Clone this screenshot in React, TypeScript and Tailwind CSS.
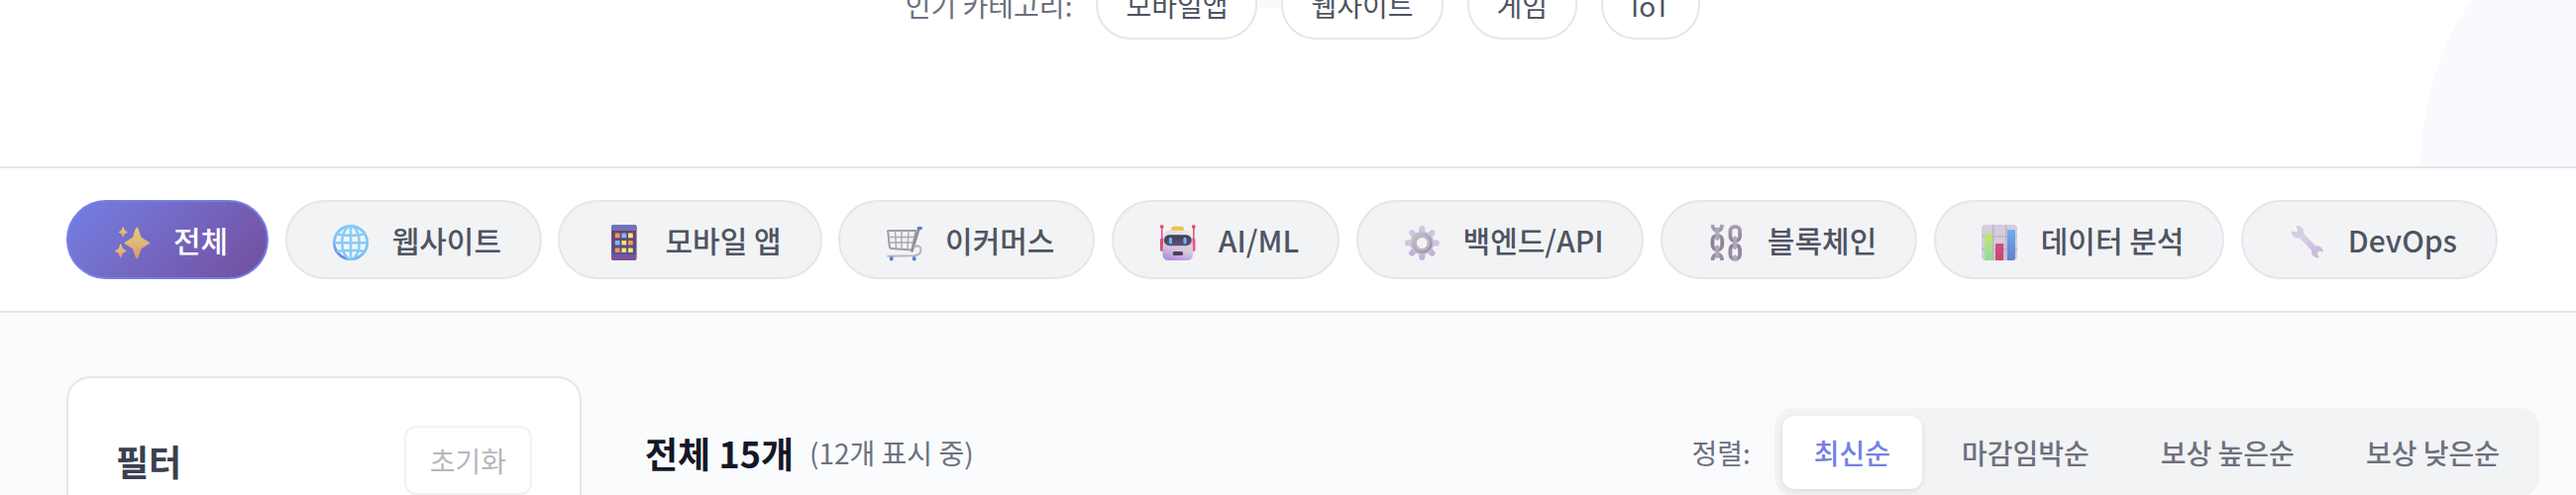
import { useState, type ReactNode } from "react";

function Icon({ children }: { children: ReactNode }) {
  return (
    <svg aria-hidden="true" viewBox="-6 -6 48 43" className="h-[43px] w-12 shrink-0 opacity-80">
      {children}
    </svg>
  );
}

function star(cx: number, cy: number, rx: number, ry: number) {
  const a = rx * 0.3;
  const b = ry * 0.3;
  return `M${cx} ${cy - ry}Q${cx + a * 0.35} ${cy - ry} ${cx + a} ${cy - b * 1.3}Q${cx + a * 1.2} ${cy - b * 1.1} ${cx + rx} ${cy}Q${cx + a * 1.2} ${cy + b * 1.1} ${cx + a} ${cy + b * 1.3}Q${cx + a * 0.35} ${cy + ry} ${cx} ${cy + ry}Q${cx - a * 0.35} ${cy + ry} ${cx - a} ${cy + b * 1.3}Q${cx - a * 1.2} ${cy + b * 1.1} ${cx - rx} ${cy}Q${cx - a * 1.2} ${cy - b * 1.1} ${cx - a} ${cy - b * 1.3}Q${cx - a * 0.35} ${cy - ry} ${cx} ${cy - ry}Z`;
}

const Sparkles = () => (
  <Icon>
    <defs>
      <linearGradient id="spark" x1="0" y1="0" x2="0" y2="1">
        <stop offset="0" stopColor="#fbe562" />
        <stop offset=".5" stopColor="#fccb62" />
        <stop offset="1" stopColor="#f79a60" />
      </linearGradient>
    </defs>
    <path fill="url(#spark)" d={star(23.2, 18.6, 13.4, 16)} />
    <path fill="url(#spark)" d={star(9.3, 7.5, 4.8, 5.6)} />
    <path fill="url(#spark)" d={star(6.8, 26.5, 6.2, 7.2)} />
  </Icon>
);

const Globe = () => (
  <Icon>
    <defs>
      <linearGradient id="globe" x1=".7" y1="0" x2=".2" y2="1">
        <stop offset="0" stopColor="#5fc0f7" />
        <stop offset=".65" stopColor="#62b4fa" />
        <stop offset="1" stopColor="#3a66d8" />
      </linearGradient>
    </defs>
    <circle cx="18" cy="18" r="16.7" fill="#f3f4f6" stroke="url(#globe)" strokeWidth="2.8" />
    <g fill="none" stroke="#6cc2fc" strokeWidth="2.5">
      <ellipse cx="18" cy="18" rx="8.8" ry="16.5" />
      <path d="M18 1v34M1.5 18.3h33M4 9.6q14 2.6 28 0M4 27q14-2.6 28 0" />
    </g>
  </Icon>
);

const tiles = ["#f4812f", "#51b5f8", "#fde04a", "#51b5f8", "#fde04a", "#f4812f", "#f4812f", "#fde04a", "#fde04a"];

const Phone = () => (
  <Icon>
    <defs>
      <linearGradient id="phone" x1="0" y1="0" x2="0" y2="1">
        <stop offset="0" stopColor="#4d1650" />
        <stop offset="1" stopColor="#292c78" />
      </linearGradient>
    </defs>
    <rect x="6" width="25.6" height="36" rx="2.6" fill="#5b2c86" />
    <path d="M6 6V2.6A2.6 2.6 0 0 1 8.6 0H29a2.6 2.6 0 0 1 2.6 2.6V6z" fill="#4c55ab" />
    <rect x="6.7" y="6" width="24.2" height="24" fill="url(#phone)" />
    {tiles.map((fill, i) => (
      <rect key={i} x={9.8 + (i % 3) * 6.6} y={8.6 + Math.floor(i / 3) * 7.4} width="4.8" height="4.6" rx=".5" fill={fill} />
    ))}
  </Icon>
);

const Cart = () => (
  <Icon>
    <g fill="none" strokeLinecap="round" strokeLinejoin="round">
      <path d="M2.3 7.2Q1 6 4 6h26.5L26.3 25.5 5.8 24Q4 24 3.6 21z" stroke="#88878d" strokeWidth="1.9" />
      <path d="M2.5 12.5h27M3.3 18h24.8M9.5 6.5l1 17.500M16 6.500v18M23 6.500l-1 18.500" stroke="#98979e" strokeWidth="1.400" />
      <path d="M33.500 4 26.500 26.500" stroke="#7b7982" strokeWidth="2.600" />
      <path d="M29 22.500c4-3 7 .5 6.400 3.500-.6 4-3.400 5-6.400 5.200L2.300 31.800" stroke="#aaa5b2" strokeWidth="2.100" />
    </g>
    <rect x="31.800" y="2" width="5" height="3" rx=".8" fill="#315fc4" />
    <ellipse cx="5.700" cy="34.300" rx="1.900" ry="2.200" fill="#315fc4" />
    <ellipse cx="28.700" cy="34.300" rx="1.900" ry="2.200" fill="#315fc4" />
  </Icon>
);

const Robot = () => (
  <Icon>
    <defs>
      <linearGradient id="bot" x1=".7" y1="0" x2=".4" y2="1">
        <stop offset="0" stopColor="#e9e4ec" />
        <stop offset=".65" stopColor="#cbbbd6" />
        <stop offset="1" stopColor="#a578de" />
      </linearGradient>
      <linearGradient id="visor" x1="0" y1="0" x2="0" y2="1">
        <stop offset="0" stopColor="#150d2c" />
        <stop offset="1" stopColor="#3b2b5c" />
      </linearGradient>
    </defs>
    <path d="M2.700 2v15M34.800 2v15" stroke="#d9265f" strokeWidth="1.500" />
    <circle cx="2.700" cy="2" r="1.900" fill="#dc2852" />
    <circle cx="34.800" cy="2" r="1.900" fill="#dc2852" />
    <rect x="1" y="13.500" width="5" height="13.500" rx="1.800" fill="#d6204f" />
    <rect x="31.500" y="13.500" width="5" height="13.500" rx="1.800" fill="#e33276" />
    <rect x="12.300" y="1.800" width="12.600" height="6" rx="2" fill="#edb51f" />
    <path d="M11 5.800h15.500q6.500 0 6.800 7L34 25v5q0 6-6 6H9.500q-6 0-6-6v-5l.7-12q.3-7.200 6.800-7.200z" fill="url(#bot)" />
    <rect x="4.800" y="10.300" width="28" height="10.900" rx="5.400" fill="url(#visor)" />
    <rect x="9.800" y="12.800" width="3.200" height="6.600" rx="1.600" fill="#48a9f4" />
    <rect x="24.400" y="12.800" width="3.200" height="6.600" rx="1.600" fill="#48a9f4" />
    <rect x="13.800" y="27" width="10.200" height="4" rx="1.500" fill="#23133b" />
  </Icon>
);

const Gear = () => (
  <Icon>
    <defs>
      <linearGradient id="gear" x1="0" y1="0" x2="1" y2="1">
        <stop offset="0" stopColor="#b3aebb" />
        <stop offset="1" stopColor="#877b95" />
      </linearGradient>
    </defs>
    {[0, 45, 90, 135, 180, 225, 270, 315].map((angle) => (
      <path
        key={angle}
        d="M15 9 15.400 3Q16 1 18.300 1T21.200 3L21.600 9z"
        fill={angle > 90 && angle < 270 ? "#b3a3ce" : "#c6bbd6"}
        transform={`rotate(${angle} 18.300 18.500)`}
      />
    ))}
    <circle cx="18.300" cy="18.500" r="12" fill="#c1b6d0" />
    <circle cx="18.300" cy="18.500" r="8" fill="#f3f4f6" stroke="url(#gear)" strokeWidth="5" />
    <circle cx="18.300" cy="18.500" r="7" fill="none" stroke="#b1a9ba" strokeWidth="1.800" />
  </Icon>
);

const Chains = () => (
  <Icon>
    <defs>
      <linearGradient id="chain" gradientUnits="userSpaceOnUse" x1="0" y1="0" x2="0" y2="36">
        <stop offset="0" stopColor="#988da6" />
        <stop offset=".5" stopColor="#716380" />
        <stop offset="1" stopColor="#84759a" />
      </linearGradient>
    </defs>
    <g fill="none" stroke="url(#chain)" strokeWidth="3.800">
      <rect x="4.500" y="10.800" width="9.700" height="14.600" rx="4.800" />
      <path d="M4.500 0q.3 5.500 4.800 6 4.500-.5 4.900-6M4.500 36q.3-5.500 4.800-6 4.500.5 4.900 6" />
      <rect x="22.400" y="1.800" width="9.700" height="14.600" rx="4.800" />
      <rect x="22.400" y="20.300" width="9.700" height="14.600" rx="4.800" />
    </g>
    <g fill="#a196a8">
      <rect x="7.300" y="2.500" width="4" height="13.500" rx="2" />
      <rect x="7.300" y="20.500" width="4" height="13.500" rx="2" />
      <rect x="25.200" y="11.500" width="4" height="13.500" rx="2" />
      <path d="M25.200 36.500V32q2-3.500 4 0v4.500z" />
    </g>
  </Icon>
);

const Chart = () => (
  <Icon>
    <defs>
      <linearGradient id="barGreen" x1="0" y1="0" x2="0" y2="1">
        <stop offset="0" stopColor="#b4e54a" />
        <stop offset="1" stopColor="#75d58b" />
      </linearGradient>
      <linearGradient id="barRed" x1="0" y1="0" x2="0" y2="1">
        <stop offset="0" stopColor="#cb246f" />
        <stop offset="1" stopColor="#c02142" />
      </linearGradient>
      <linearGradient id="barBlue" x1="0" y1="0" x2="0" y2="1">
        <stop offset="0" stopColor="#519cf0" />
        <stop offset="1" stopColor="#3f62bd" />
      </linearGradient>
    </defs>
    <rect width="36" height="36" rx="4" fill="#cdc4d6" />
    <path d="M11.800 0v36M24.800 0v36M0 11.800h36M0 24.600h36" stroke="#aba1b7" strokeWidth="1.300" />
    <path d="M3.300 36V10q0-1 1-1H10q1 0 1 1v26z" fill="url(#barGreen)" />
    <path d="M14 36V20q0-1 1-1h6.300q1 0 1 1v16z" fill="url(#barRed)" />
    <path d="M26 36V6q0-1 1-1h6q1 0 1 1v28q-.5 1.500-2 2z" fill="url(#barBlue)" />
  </Icon>
);

const Wrench = () => (
  <Icon>
    <defs>
      <linearGradient id="wrench" gradientUnits="userSpaceOnUse" x1="4" y1="2" x2="34" y2="34">
        <stop offset="0" stopColor="#c5c2c9" />
        <stop offset=".35" stopColor="#d4c8e6" />
        <stop offset=".7" stopColor="#c3b2df" />
        <stop offset="1" stopColor="#bbb6c3" />
      </linearGradient>
    </defs>
    <path
      d="M3 6.200 7.300 7.500Q9 7.500 9 5.500L7.500 1.200C12 .3 15.800 3.700 15.200 9L27 21.300c4.700-.6 8.200 2.700 7.800 6.200L31.300 26.700Q29 26.700 29 29l1.800 4.200c-4.500 1.200-8.600-2.400-7.700-7.500L11 13.500C6.200 14.400 2.500 11 3 6.200z"
      fill="url(#wrench)"
    />
  </Icon>
);

const categories = [
  { label: "전체", icon: Sparkles },
  { label: "웹사이트", icon: Globe },
  { label: "모바일 앱", icon: Phone },
  { label: "이커머스", icon: Cart },
  { label: "AI/ML", icon: Robot },
  { label: "백엔드/API", icon: Gear },
  { label: "블록체인", icon: Chains },
  { label: "데이터 분석", icon: Chart },
  { label: "DevOps", icon: Wrench },
];

const popular = ["모바일앱", "웹사이트", "게임", "IoT"];
const sorts = ["최신순", "마감임박순", "보상 높은순", "보상 낮은순"];

export default function App() {
  const [category, setCategory] = useState("전체");
  const [sort, setSort] = useState("최신순");

  return (
    <div className="flex h-screen flex-col overflow-hidden bg-[#fafbfd] font-['Noto_Sans_CJK_KR',sans-serif] text-[28px] leading-[42px] text-[#4e5462]">
      <header className="relative shrink-0 overflow-hidden border-b-2 border-[#e5e6eb] bg-white">
        <div className="absolute -right-[443px] -bottom-[300px] size-[600px] rounded-full bg-[#f9fafe]" />
        <div className="absolute bottom-[159px] left-1/2 size-[600px] -translate-x-1/2 rounded-full bg-[#f9fafe]" />
        <div className="relative -mt-[30px] flex items-center justify-center gap-6 pb-32 pl-[30px]">
          <span className="text-[#6d717d]">인기 카테고리:</span>
          {popular.map((name) => (
            <button key={name} type="button" className="rounded-full border-2 border-[#e5e6eb] bg-white px-7 py-3">
              {name}
            </button>
          ))}
        </div>
      </header>

      <nav className="flex shrink-0 justify-between gap-4 border-b-2 border-[#e5e6eb] bg-white py-8 pr-[79px] pl-[67px]">
        {categories.map(({ label, icon: CategoryIcon }) => (
          <button
            key={label}
            type="button"
            aria-pressed={category === label}
            onClick={() => setCategory(label)}
            className={`flex h-20 shrink-0 items-center gap-[18px] rounded-full border-2 pr-[39px] pl-10 text-[30px] font-medium whitespace-nowrap ${
              category === label
                ? "border-[#737fe6] bg-linear-135 from-[#737fe4] to-[#714e9e] text-white"
                : "border-[#e5e6eb] bg-[#f2f3f5]"
            }`}
          >
            <CategoryIcon />
            {label}
          </button>
        ))}
      </nav>

      <main className="flex grow gap-16 pt-16 pr-[37px] pl-[67px]">
        <aside className="w-[520px] shrink-0 rounded-t-3xl border-2 border-b-0 border-[#e5e6eb] bg-white p-12">
          <div className="flex items-center justify-between">
            <h2 className="text-[36px] font-bold text-[#3a404f]">필터</h2>
            <button type="button" disabled className="rounded-xl border-2 border-[#e5e6eb] px-6 py-3 text-[#6d717d] opacity-50">
              초기화
            </button>
          </div>
        </aside>
        <section className="flex grow items-start justify-between pt-8">
          <div className="flex h-[90px] items-center gap-4">
            <h1 className="text-[36px] font-bold text-[#141826]">전체 15개</h1>
            <span className="text-[#6d717d]">(12개 표시 중)</span>
          </div>
          <div className="flex items-center gap-6 text-[#6d717d]">
            <span>정렬:</span>
            <div className="flex gap-2 rounded-[20px] bg-[#f2f3f5] p-2">
              {sorts.map((name) => (
                <button
                  key={name}
                  type="button"
                  aria-pressed={sort === name}
                  onClick={() => setSort(name)}
                  className={`rounded-xl px-8 py-4 font-medium whitespace-nowrap ${
                    sort === name ? "bg-white text-[#737fe6] shadow-[0_2px_6px_rgba(0,0,0,0.1)]" : ""
                  }`}
                >
                  {name}
                </button>
              ))}
            </div>
          </div>
        </section>
      </main>
    </div>
  );
}
